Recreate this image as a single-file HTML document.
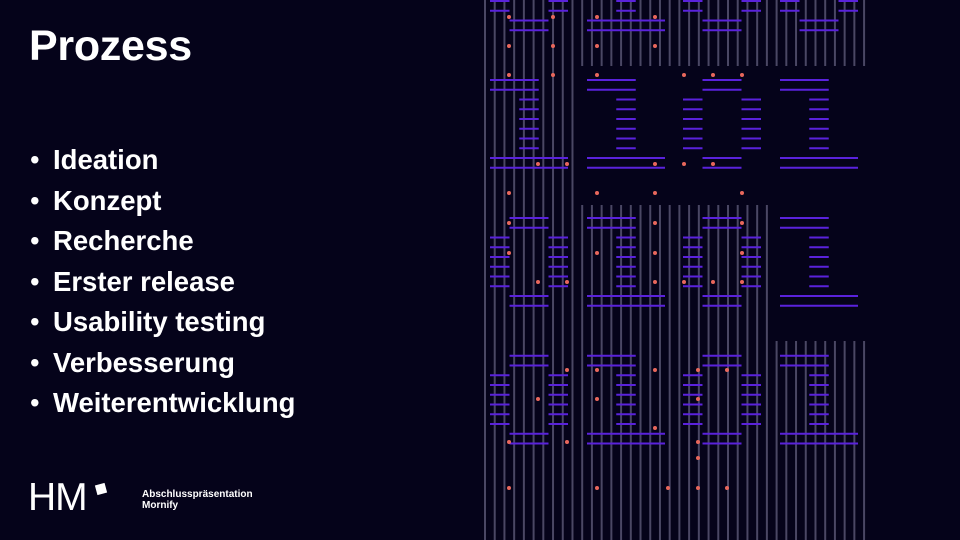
<!DOCTYPE html>
<html><head><meta charset="utf-8"><style>
html,body{margin:0;padding:0;}
body{width:960px;height:540px;background:#05031a;overflow:hidden;position:relative;font-family:"Liberation Sans",Arial,sans-serif;color:#fff;}
h1{position:absolute;left:29px;top:22px;margin:0;font-size:43px;font-weight:bold;letter-spacing:-0.3px;}
ul{position:absolute;left:30px;top:143px;margin:0;padding:0;list-style:none;font-size:27.5px;font-weight:bold;}
li{height:40.5px;line-height:33px;}
li:before{content:"•";display:inline-block;width:23px;font-weight:normal;}
.hm{position:absolute;left:28px;top:478px;font-size:39px;line-height:39px;letter-spacing:-1px;}
.sq{position:absolute;left:96px;top:484px;width:10px;height:10px;background:#fff;transform:rotate(-15deg);}
.sub{position:absolute;left:142px;top:489px;font-size:10px;line-height:11px;font-weight:bold;}
svg{position:absolute;left:0;top:0;}
</style></head><body>
<h1>Prozess</h1>
<ul><li>Ideation</li><li>Konzept</li><li>Recherche</li><li>Erster release</li><li>Usability testing</li><li>Verbesserung</li><li>Weiterentwicklung</li></ul>
<div class="hm">HM</div><div class="sq"></div>
<div class="sub">Abschlusspräsentation<br>Mornify</div>
<svg id="s" width="960" height="540"></svg>
<script>
var s=document.getElementById('s'),h='';
function ln(x1,y1,x2,y2,c){h+='<line x1="'+x1+'" y1="'+y1+'" x2="'+x2+'" y2="'+y2+'" stroke="'+c+'" stroke-width="2"/>';}
var G='#4a4764',P='#5a22dc';
for(var k=0;k<40;k++){var x=485+k*9.72;var b=k<10?0:k<20?1:k<30?2:3;
 if(b==0){ln(x,0,x,540,G);}
 else{ln(x,0,x,66,G); if(b<3){ln(x,205,x,540,G);} else {ln(x,341,x,540,G);} }
}
var ox=[490,587,683,780],oy=[-57.5,80,218,355.7],u=9.75;
var D=[[0,1,0,0],[1,1,0,1],[0,1,0,1],[0,1,0,1]];
function bar(x0,y0,r,c1,c2){var y=y0+r*u;if(y<-2)return;ln(x0+c1*u,y,x0+c2*u,y,P);}
for(var r=0;r<4;r++)for(var c=0;c<4;c++){var x0=ox[c],y0=oy[r];
 if(D[r][c]==1){bar(x0,y0,0,0,5);bar(x0,y0,1,0,5);for(var i=2;i<8;i++)bar(x0,y0,i,3,5);bar(x0,y0,8,0,8);bar(x0,y0,9,0,8);}
 else{bar(x0,y0,0,2,6);bar(x0,y0,1,2,6);for(var i=2;i<8;i++){bar(x0,y0,i,0,2);bar(x0,y0,i,6,8);}bar(x0,y0,8,2,6);bar(x0,y0,9,2,6);}
}
var dots=[[509,17],[553,17],[597,17],[655,17],[509,46],[553,46],[597,46],[655,46],[509,75],[553,75],[597,75],[684,75],[713,75],[742,75],[538,164],[567,164],[655,164],[684,164],[713,164],[509,193],[597,193],[655,193],[742,193],[509,223],[655,223],[742,223],[509,253],[597,253],[655,253],[742,253],[538,282],[567,282],[655,282],[684,282],[713,282],[742,282],[567,370],[597,370],[655,370],[698,370],[727,370],[538,399],[597,399],[698,399],[655,428],[509,442],[567,442],[698,442],[698,458],[509,488],[597,488],[668,488],[698,488],[727,488]];
dots.forEach(function(d){h+='<circle cx="'+d[0]+'" cy="'+d[1]+'" r="2" fill="#e8675c"/>';});
s.innerHTML=h;
</script>
</body></html>
